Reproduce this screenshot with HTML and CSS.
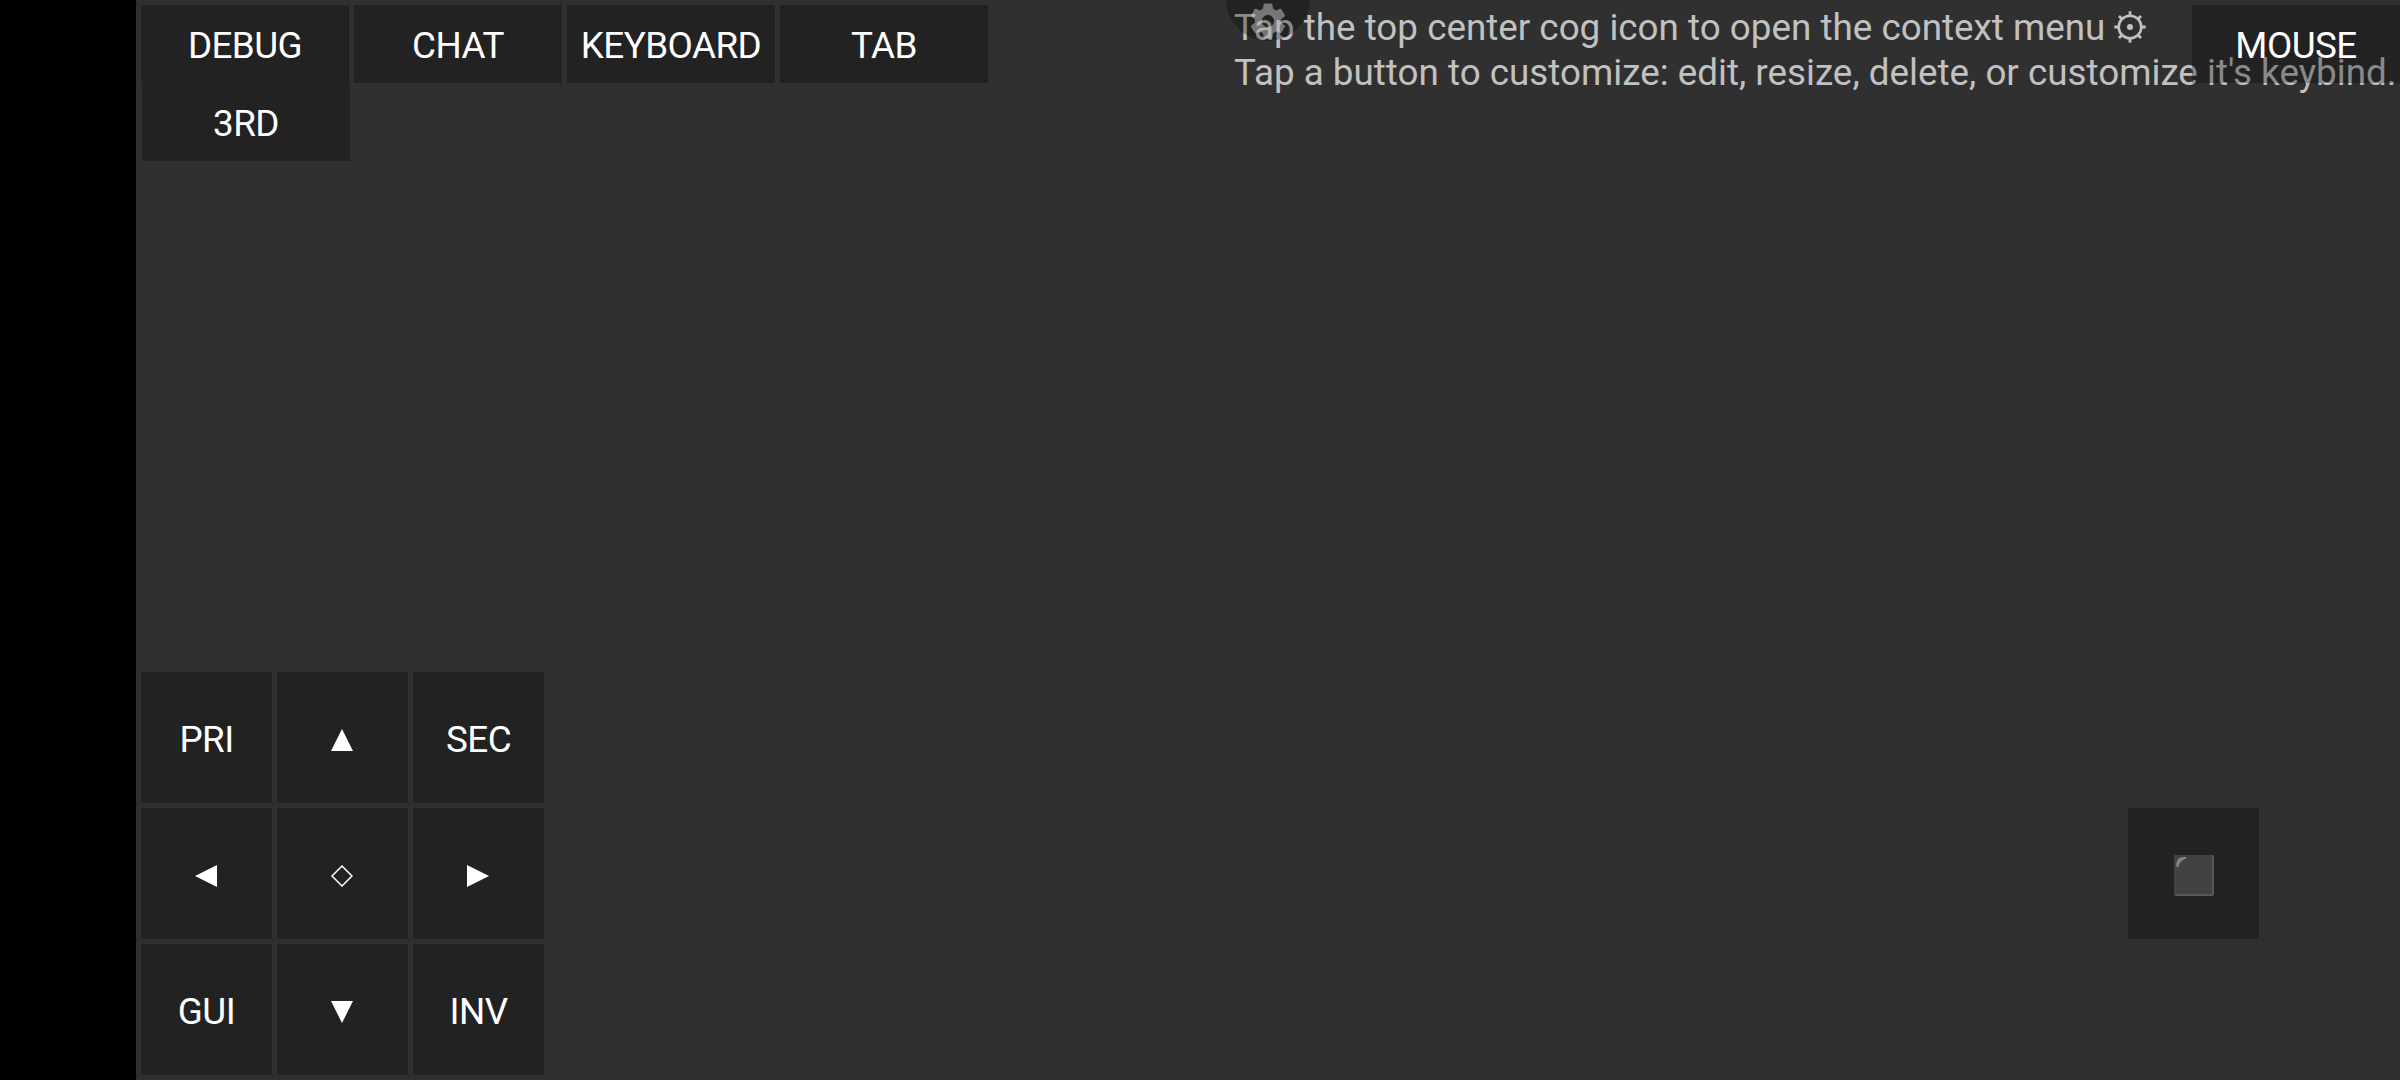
FILE: index.html
```html
<!DOCTYPE html>
<html lang="en">
<head>
<meta charset="utf-8">
<title>Control layout editor</title>
<link rel="stylesheet" href="styles.css">
</head>
<body>
<main class="screen">
  <div class="hint">
    <p class="hint-line">Tap the top center cog icon to open the context menu <svg class="hint-cog" viewBox="0 0 32 32"><circle cx="16" cy="16" r="11.3" fill="none" stroke="currentColor" stroke-width="2.6"/><circle cx="16" cy="16" r="3" fill="currentColor"/><path d="M16 4V.3M16 28v3.7M4 16H.3M28 16h3.7M7.5 7.500 5 5M24.500 7.500 27 5M7.500 24.500 5 27M24.500 24.500 27 27" stroke="currentColor" stroke-width="2.8"/></svg></p>
    <p class="hint-line">Tap a button to customize: edit, resize, delete, or customize it's keybind.</p>
  </div>
  <header class="top">
    <div class="top-left">
      <div class="row">
        <button class="key wide">DEBUG</button>
        <button class="key wide">CHAT</button>
        <button class="key wide">KEYBOARD</button>
        <button class="key wide">TAB</button>
      </div>
      <button class="key wide third">3RD</button>
    </div>
    <button class="key wide">MOUSE</button>
  </header>
  <section class="bottom">
    <div class="pad">
      <button class="key">PRI</button>
      <button class="key"><svg class="glyph" viewBox="0 0 22 22"><path d="M11 0 22 22H0z" fill="#fff"/></svg></button>
      <button class="key">SEC</button>
      <button class="key"><svg class="glyph" viewBox="0 0 22 22"><path d="M0 11 22 0v22z" fill="#fff"/></svg></button>
      <button class="key"><svg class="glyph" viewBox="0 0 22 22"><path d="M11 1 21 11 11 21 1 11z" fill="none" stroke="#fff" stroke-width="1.5"/></svg></button>
      <button class="key"><svg class="glyph" viewBox="0 0 22 22"><path d="M22 11 0 0v22z" fill="#fff"/></svg></button>
      <button class="key">GUI</button>
      <button class="key"><svg class="glyph" viewBox="0 0 22 22"><path d="M11 22 22 0H0z" fill="#fff"/></svg></button>
      <button class="key">INV</button>
    </div>
    <button class="key jump"><svg class="block" viewBox="0 0 40 41"><rect width="40" height="41" rx="2" fill="#585858"/><path d="M2 0h34a2 2 0 0 1 2 2v35a2 2 0 0 1-2 2H0V2a2 2 0 0 1 2-2z" fill="#424242"/><path d="M3 12C2 5 5 2 12 2.500c1.500 1-6 1-8 9z" fill="#858585" stroke="#858585"/></svg></button>
  </section>
  <div class="menu"><svg class="menu-cog" viewBox="0 0 24 24"><path fill="#fff" fill-opacity=".38" d="M19.430 12.980c.04-.32.07-.64.07-.98s-.03-.66-.07-.98l2.110-1.650c.19-.15.24-.42.12-.64l-2-3.460c-.12-.22-.39-.3-.61-.22l-2.490 1c-.52-.4-1.080-.73-1.690-.98l-.38-2.650C14.460 2.180 14.250 2 14 2h-4c-.25 0-.46.18-.49.42l-.38 2.650c-.61.25-1.170.59-1.690.98l-2.490-1c-.23-.09-.49 0-.61.22l-2 3.460c-.13.22-.07.49.12.64l2.110 1.650c-.04.32-.07.65-.07.98s.03.66.07.98l-2.110 1.650c-.19.15-.24.42-.12.64l2 3.460c.12.22.39.3.61.22l2.490-1c.52.4 1.080.73 1.690.98l.38 2.650c.03.24.24.42.49.42h4c.25 0 .46-.18.49-.42l.38-2.650c.61-.25 1.170-.59 1.690-.98l2.490 1c.23.09.49 0 .61-.22l2-3.460c.12-.22.07-.49-.12-.64l-2.110-1.650zM12 15.500c-1.930 0-3.500-1.570-3.500-3.500s1.570-3.500 3.500-3.500 3.500 1.570 3.500 3.500-1.570 3.500-3.500 3.500z"/></svg></div>
</main>
</body>
</html>
```
FILE: styles.css
```css
* { box-sizing: border-box; }
body { margin: 0; background: #000; }
.screen {
  position: relative;
  display: flex;
  flex-direction: column;
  justify-content: space-between;
  height: 1080px;
  margin-left: 136px;
  padding: 5px 0 5px 5px;
  overflow: hidden;
  background: #303030;
  font-family: Roboto, sans-serif;
  font-size: 36.8px;
}
.key {
  display: flex;
  align-items: center;
  justify-content: center;
  width: 131px;
  height: 131px;
  padding: 3px 0 0;
  border: 0;
  background: rgba(0, 0, 0, .29);
  color: #fff;
  font: inherit;
  line-height: 43px;
  letter-spacing: -.55px;
}
.wide { width: 208px; height: 78px; }
.top { position: relative; display: flex; justify-content: space-between; align-items: flex-start; }
.row { display: flex; gap: 5px; }
.third { margin-left: 1px; }
.bottom { display: flex; justify-content: space-between; align-items: center; }
.pad { display: grid; grid-template-columns: repeat(3, 131px); gap: 5px; }
.jump { margin-right: 141px; }
.glyph { width: 22px; height: 22px; margin: 2px 1px 0 0; }
.block { width: 40px; height: 41px; margin-top: 1px; }
/* The hint runs underneath the translucent controls. */
.hint { position: absolute; top: 5px; left: 1098px; color: #c1c1c1; white-space: nowrap; }
.hint-line { margin: 0; line-height: 45px; }
.hint-cog { width: 32px; height: 32px; vertical-align: -3px; }
.menu {
  position: absolute;
  top: -43px;
  left: 1090px;
  width: 84px;
  height: 84px;
  padding: 43px 0 0 21px;
  border-radius: 50%;
  background: rgba(0, 0, 0, .29);
}
.menu-cog { display: block; width: 42px; height: 42px; }
```
